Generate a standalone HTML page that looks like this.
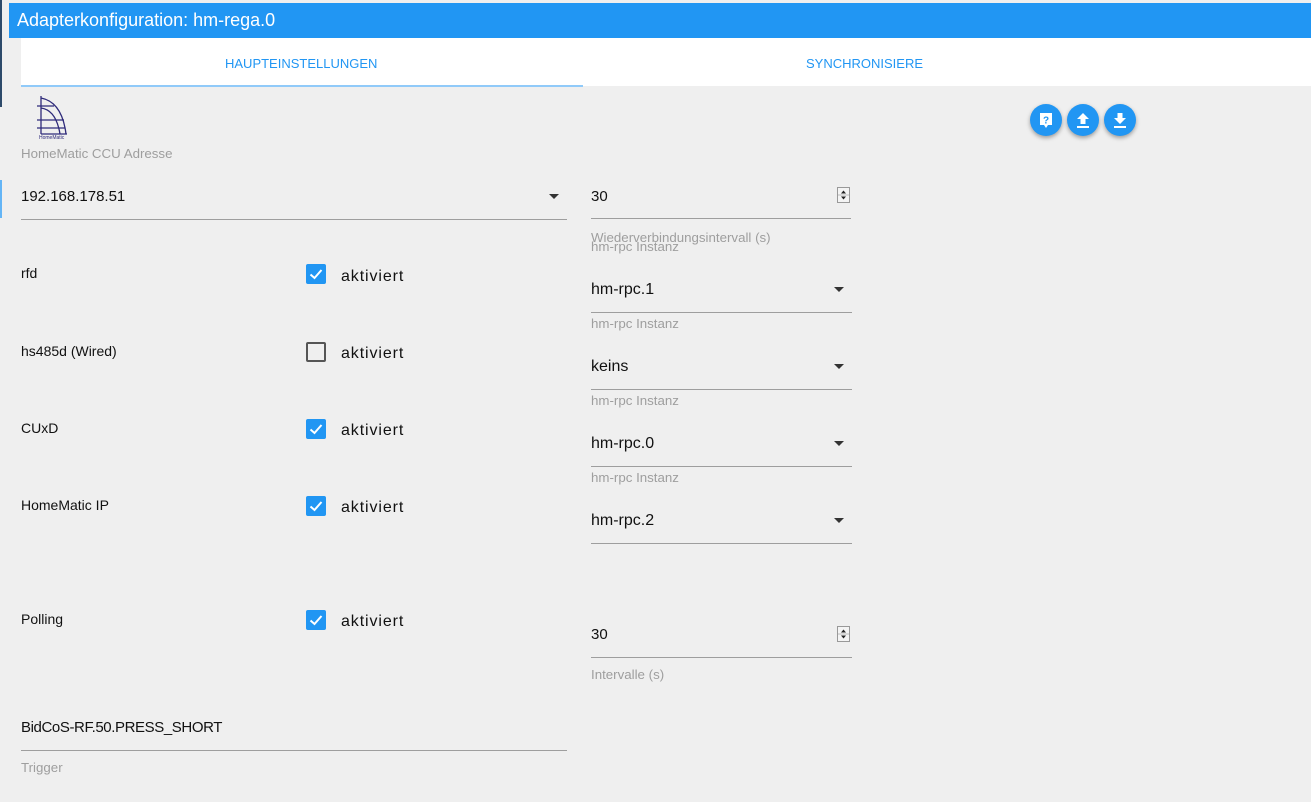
<!DOCTYPE html>
<html><head><meta charset="utf-8"><style>
*{margin:0;padding:0;box-sizing:border-box}
body{width:1311px;height:802px;background:#efefef;font-family:"Liberation Sans",sans-serif;position:relative;overflow:hidden}
.a{position:absolute;white-space:nowrap}
.t{font-size:15px;color:#111}
.ak{font-size:16px;color:#111;letter-spacing:0.9px}
.l{font-size:13.3px;color:#9e9e9e}
.k{font-size:14px;color:#111}
.u{position:absolute;height:1px;background:#9e9e9e}
.arr{position:absolute;width:0;height:0;border-left:5px solid transparent;border-right:5px solid transparent;border-top:5px solid #333}
.cb{position:absolute;width:20px;height:20px;border-radius:2px;background:#2196F3}
.cb svg{position:absolute;left:2px;top:2px}
.cbo{position:absolute;width:20px;height:20px;border-radius:2px;border:2px solid #555}
.btn{position:absolute;width:32px;height:32px;border-radius:50%;background:#2196F3;box-shadow:0 2px 4px rgba(0,0,0,.35)}
.sp{position:absolute;width:13px;height:16px;border:1px solid #999;background:#f4f4f4}
</style></head><body>
<div class="a" style="left:0;top:0;width:2px;height:107px;background:#2d4a6a"></div>
<div class="a" style="left:0;top:180px;width:2px;height:38px;background:#64b5f6"></div>
<div class="a" style="left:9px;top:3px;width:1302px;height:35px;background:#2196F3"></div>
<div class="a" style="left:17px;top:10px;font-size:18px;color:#fff">Adapterkonfiguration: hm-rega.0</div>
<div class="a" style="left:21px;top:38px;width:1290px;height:48px;background:#fff"></div>
<div class="a" style="left:225px;top:56px;font-size:13px;color:#2196F3">HAUPTEINSTELLUNGEN</div>
<div class="a" style="left:806px;top:56px;font-size:13px;color:#2196F3">SYNCHRONISIERE</div>
<div class="a" style="left:21px;top:85px;width:562px;height:2px;background:#90CAF9"></div>
<svg class="a" style="left:34px;top:94px" width="38" height="46" viewBox="0 0 38 46">
<g stroke="#2e2a7a" fill="none" stroke-width="1.3"><path d="M7 2V40M7 4Q28 8 32 40M7 14Q22 16 26 40M3 12H20M3 26H30M3 34H31M7 40H33"/></g>
<text x="5" y="45" font-size="5" fill="#2e2a7a" font-family="Liberation Sans">HomeMatic</text></svg>
<div class="a l" style="left:21px;top:146px">HomeMatic CCU Adresse</div>
<div class="a t" style="left:21px;top:188px">192.168.178.51</div>
<div class="arr" style="left:549px;top:194px"></div>
<div class="u" style="left:21px;top:219px;width:546px"></div>
<div class="a t" style="left:591px;top:188px">30</div>
<div class="sp" style="left:837px;top:187px"><svg width="11" height="14" style="position:absolute;left:0;top:0"><path d="M3 5.5L5.5 2.5L8 5.5z M3 8.5L5.5 11.5L8 8.5z" fill="#222"/><path d="M0 7H11" stroke="#bbb"/></svg></div>
<div class="u" style="left:591px;top:218px;width:260px"></div>
<div class="a l" style="left:591px;top:230px">Wiederverbindungsintervall (s)</div>
<div class="a l" style="left:591px;top:239px">hm-rpc Instanz</div>

<div class="a k" style="left:21px;top:265px">rfd</div>
<div class="cb" style="left:306px;top:264px"><svg width="16" height="16"><path d="M2.5 8.5L6.5 12L13.5 4" stroke="#fff" stroke-width="2" fill="none"/></svg></div>
<div class="a ak" style="left:341px;top:268px">aktiviert</div>
<div class="a k" style="left:21px;top:343px">hs485d (Wired)</div>
<div class="cbo" style="left:306px;top:342px"></div>
<div class="a ak" style="left:341px;top:345px">aktiviert</div>
<div class="a k" style="left:21px;top:420px">CUxD</div>
<div class="cb" style="left:306px;top:419px"><svg width="16" height="16"><path d="M2.5 8.5L6.5 12L13.5 4" stroke="#fff" stroke-width="2" fill="none"/></svg></div>
<div class="a ak" style="left:341px;top:422px">aktiviert</div>
<div class="a k" style="left:21px;top:497px">HomeMatic IP</div>
<div class="cb" style="left:306px;top:496px"><svg width="16" height="16"><path d="M2.5 8.5L6.5 12L13.5 4" stroke="#fff" stroke-width="2" fill="none"/></svg></div>
<div class="a ak" style="left:341px;top:499px">aktiviert</div>
<div class="a k" style="left:21px;top:611px">Polling</div>
<div class="cb" style="left:306px;top:610px"><svg width="16" height="16"><path d="M2.5 8.5L6.5 12L13.5 4" stroke="#fff" stroke-width="2" fill="none"/></svg></div>
<div class="a ak" style="left:341px;top:613px">aktiviert</div>

<div class="a t" style="left:591px;top:281px;font-size:16px">hm-rpc.1</div>
<div class="arr" style="left:834px;top:287px"></div>
<div class="u" style="left:591px;top:312px;width:261px"></div>
<div class="a l" style="left:591px;top:316px">hm-rpc Instanz</div>
<div class="a t" style="left:591px;top:358px;font-size:16px">keins</div>
<div class="arr" style="left:834px;top:364px"></div>
<div class="u" style="left:591px;top:389px;width:261px"></div>
<div class="a l" style="left:591px;top:393px">hm-rpc Instanz</div>
<div class="a t" style="left:591px;top:435px;font-size:16px">hm-rpc.0</div>
<div class="arr" style="left:834px;top:441px"></div>
<div class="u" style="left:591px;top:466px;width:261px"></div>
<div class="a l" style="left:591px;top:470px">hm-rpc Instanz</div>
<div class="a t" style="left:591px;top:512px;font-size:16px">hm-rpc.2</div>
<div class="arr" style="left:834px;top:518px"></div>
<div class="u" style="left:591px;top:543px;width:261px"></div>

<div class="a t" style="left:591px;top:626px">30</div>
<div class="sp" style="left:837px;top:626px"><svg width="11" height="14" style="position:absolute;left:0;top:0"><path d="M3 5.5L5.5 2.5L8 5.5z M3 8.5L5.5 11.5L8 8.5z" fill="#222"/><path d="M0 7H11" stroke="#bbb"/></svg></div>
<div class="u" style="left:591px;top:657px;width:261px"></div>
<div class="a l" style="left:591px;top:667px">Intervalle (s)</div>

<div class="a t" style="left:21px;top:719px;letter-spacing:-0.4px">BidCoS-RF.50.PRESS_SHORT</div>
<div class="u" style="left:21px;top:750px;width:546px"></div>
<div class="a l" style="left:21px;top:760px">Trigger</div>

<div class="btn" style="left:1030px;top:104px"><svg width="32" height="32"><path d="M10 9h12v12h-4l-2 3-2-3h-4z" fill="#fff"/><text x="16" y="19.5" font-size="10" font-weight="bold" fill="#2196F3" text-anchor="middle" font-family="Liberation Sans">?</text></svg></div>
<div class="btn" style="left:1067px;top:104px"><svg width="32" height="32"><path d="M16 9l6 6h-3.5v5h-5v-5H10z M10 22h12v2H10z" fill="#fff"/></svg></div>
<div class="btn" style="left:1104px;top:104px"><svg width="32" height="32"><path d="M13.5 9h5v5H22l-6 6-6-6h3.5z M10 22h12v2H10z" fill="#fff"/></svg></div>
</body></html>
